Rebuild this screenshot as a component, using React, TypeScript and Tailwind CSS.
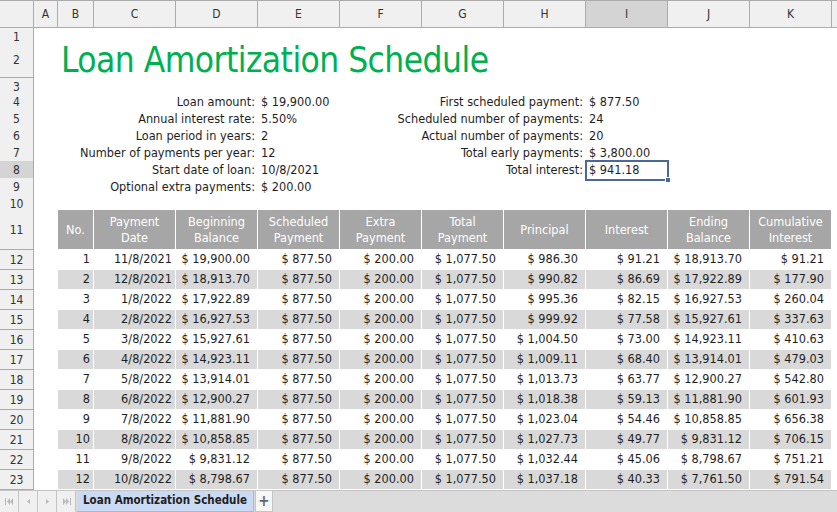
import type { ReactNode } from 'react';

const COLS = 'grid grid-cols-[34px_24px_36px_repeat(9,82px)_1fr]';
const LETTERS = ['A', 'B', 'C', 'D', 'E', 'F', 'G', 'H', 'I', 'J', 'K'];

interface Payment {
  no: number;
  date: string;
  begin: string;
  principal: string;
  interest: string;
  ending: string;
  cumulative: string;
}

const payments: Payment[] = [
  { no: 1, date: '11/8/2021', begin: '$ 19,900.00', principal: '$ 986.30', interest: '$ 91.21', ending: '$ 18,913.70', cumulative: '$ 91.21' },
  { no: 2, date: '12/8/2021', begin: '$ 18,913.70', principal: '$ 990.82', interest: '$ 86.69', ending: '$ 17,922.89', cumulative: '$ 177.90' },
  { no: 3, date: '1/8/2022', begin: '$ 17,922.89', principal: '$ 995.36', interest: '$ 82.15', ending: '$ 16,927.53', cumulative: '$ 260.04' },
  { no: 4, date: '2/8/2022', begin: '$ 16,927.53', principal: '$ 999.92', interest: '$ 77.58', ending: '$ 15,927.61', cumulative: '$ 337.63' },
  { no: 5, date: '3/8/2022', begin: '$ 15,927.61', principal: '$ 1,004.50', interest: '$ 73.00', ending: '$ 14,923.11', cumulative: '$ 410.63' },
  { no: 6, date: '4/8/2022', begin: '$ 14,923.11', principal: '$ 1,009.11', interest: '$ 68.40', ending: '$ 13,914.01', cumulative: '$ 479.03' },
  { no: 7, date: '5/8/2022', begin: '$ 13,914.01', principal: '$ 1,013.73', interest: '$ 63.77', ending: '$ 12,900.27', cumulative: '$ 542.80' },
  { no: 8, date: '6/8/2022', begin: '$ 12,900.27', principal: '$ 1,018.38', interest: '$ 59.13', ending: '$ 11,881.90', cumulative: '$ 601.93' },
  { no: 9, date: '7/8/2022', begin: '$ 11,881.90', principal: '$ 1,023.04', interest: '$ 54.46', ending: '$ 10,858.85', cumulative: '$ 656.38' },
  { no: 10, date: '8/8/2022', begin: '$ 10,858.85', principal: '$ 1,027.73', interest: '$ 49.77', ending: '$ 9,831.12', cumulative: '$ 706.15' },
  { no: 11, date: '9/8/2022', begin: '$ 9,831.12', principal: '$ 1,032.44', interest: '$ 45.06', ending: '$ 8,798.67', cumulative: '$ 751.21' },
  { no: 12, date: '10/8/2022', begin: '$ 8,798.67', principal: '$ 1,037.18', interest: '$ 40.33', ending: '$ 7,761.50', cumulative: '$ 791.54' },
];

const headers = [
  ['No.'],
  ['Payment', 'Date'],
  ['Beginning', 'Balance'],
  ['Scheduled', 'Payment'],
  ['Extra', 'Payment'],
  ['Total', 'Payment'],
  ['Principal'],
  ['Interest'],
  ['Ending', 'Balance'],
  ['Cumulative', 'Interest'],
];

const leftInfo: [string, string][] = [
  ['Loan amount:', '$ 19,900.00'],
  ['Annual interest rate:', '5.50%'],
  ['Loan period in years:', '2'],
  ['Number of payments per year:', '12'],
  ['Start date of loan:', '10/8/2021'],
  ['Optional extra payments:', '$ 200.00'],
];

const rightInfo: [string, string][] = [
  ['First scheduled payment:', '$ 877.50'],
  ['Scheduled number of payments:', '24'],
  ['Actual number of payments:', '20'],
  ['Total early payments:', '$ 3,800.00'],
  ['Total interest:', '$ 941.18'],
];

function RowHead({ n, active }: { n: number; active?: boolean }) {
  return (
    <div
      className={`flex items-center justify-center border-r border-b border-[#ababab] text-[12px] text-[#333] ${
        active ? 'bg-[#d4d4d4]' : 'bg-[#f0f0f0]'
      }`}
    >
      {n}
    </div>
  );
}

function Row({ n, h, active, children }: { n: number; h: string; active?: boolean; children?: ReactNode }) {
  return (
    <div className={`${COLS} ${h}`}>
      <RowHead n={n} active={active} />
      {children}
    </div>
  );
}

function Empty({ count = 1 }: { count?: number }) {
  return (
    <>
      {Array.from({ length: count }).map((_, i) => (
        <div key={i} />
      ))}
    </>
  );
}

function Label({ text }: { text: string }) {
  return (
    <div className="flex items-center justify-end whitespace-nowrap pr-[3px]">
      <span>{text}</span>
    </div>
  );
}

function Value({ text, selected }: { text: string; selected?: boolean }) {
  return (
    <div className="relative flex items-center whitespace-nowrap pl-[3px]">
      {text}
      {selected && (
        <div className="absolute -left-px -top-px -right-px -bottom-px border-2 border-[#4a6899]">
          <div className="absolute -right-[4px] -bottom-[4px] w-[6px] h-[6px] bg-[#4a6899] border border-white" />
        </div>
      )}
    </div>
  );
}

function TCell({ children, bg, pr = 'pr-[7px]' }: { children: ReactNode; bg: string; pr?: string }) {
  return (
    <div className={`flex items-center justify-end whitespace-nowrap border-r border-b border-white ${bg} ${pr}`}>
      {children}
    </div>
  );
}

export default function App() {
  return (
    <div className="w-[837px] h-[512px] overflow-hidden bg-white flex flex-col text-[12.6px] text-[#1e1e1e] font-['DejaVu_Sans_Condensed','DejaVu_Sans',sans-serif]">
      {/* column headers */}
      <div className={`${COLS} h-[28px] text-[12px]`}>
        <div className="border-r border-b border-t border-[#ababab] bg-[#f0f0f0]" />
        {LETTERS.map((l) => (
          <div
            key={l}
            className={`flex items-center justify-center border-r border-b border-t border-[#ababab] text-[#333] ${
              l === 'I' ? 'bg-[#d4d4d4]' : 'bg-[#f0f0f0]'
            }`}
          >
            {l}
          </div>
        ))}
        <div className="border-b border-t border-[#ababab] bg-[#f0f0f0]" />
      </div>

      <Row n={1} h="h-[15px]" />
      <Row n={2} h="h-[35px]">
        <div />
        <div className="relative">
          <div className="absolute left-[3px] top-0 bottom-0 flex items-center whitespace-nowrap text-[35px] text-[#00b050] tracking-[-0.55px]">
            Loan Amortization Schedule
          </div>
        </div>
      </Row>
      <Row n={3} h="h-[15px]" />

      {leftInfo.map(([label, value], i) => {
        const right = rightInfo[i];
        return (
          <Row key={label} n={4 + i} h="h-[17px]" active={i === 4}>
            <Empty count={3} />
            <Label text={label} />
            <Value text={value} />
            <Empty count={2} />
            {right ? <Label text={right[0]} /> : <div />}
            {right ? <Value text={right[1]} selected={i === 4} /> : <div />}
            <Empty count={3} />
          </Row>
        );
      })}

      <Row n={10} h="h-[15px]" />

      <Row n={11} h="h-[40px]">
        <div />
        {headers.map((lines) => (
          <div
            key={lines.join(' ')}
            className="flex flex-col items-center justify-center border-r border-b border-white bg-[#a6a6a6] text-white leading-[16px]"
          >
            {lines.map((t) => (
              <span key={t}>{t}</span>
            ))}
          </div>
        ))}
        <div />
      </Row>

      {payments.map((p, i) => {
        const bg = i % 2 === 0 ? 'bg-white' : 'bg-[#d9d9d9]';
        return (
          <Row key={p.no} n={12 + i} h="h-[20px]">
            <div />
            <TCell bg={bg} pr="pr-[3px]">{p.no}</TCell>
            <TCell bg={bg} pr="pr-[3px]">{p.date}</TCell>
            <TCell bg={bg}>{p.begin}</TCell>
            <TCell bg={bg}>$ 877.50</TCell>
            <TCell bg={bg}>$ 200.00</TCell>
            <TCell bg={bg}>$ 1,077.50</TCell>
            <TCell bg={bg}>{p.principal}</TCell>
            <TCell bg={bg}>{p.interest}</TCell>
            <TCell bg={bg}>{p.ending}</TCell>
            <TCell bg={bg}>{p.cumulative}</TCell>
            <div />
          </Row>
        );
      })}

      {/* sheet tabs */}
      <div className="flex h-[22px] bg-[#dcdcdc] border-t border-[#c4c4c4]">
        {['first', 'prev', 'next', 'last'].map((k) => (
          <div key={k} className="flex w-[19px] items-center justify-center border-r border-[#c4c4c4] bg-[#f0f0f0]">
            <svg width="9" height="7" viewBox="0 0 9 7" fill="#b8b8b8">
              {k === 'first' && (
                <>
                  <rect x="0" y="0" width="1" height="7" />
                  <path d="M5 0 L2 3.5 L5 7 Z" />
                  <path d="M8 0 L5 3.5 L8 7 Z" />
                </>
              )}
              {k === 'prev' && <path d="M6 1 L3 3.5 L6 6 Z" />}
              {k === 'next' && <path d="M3 1 L6 3.5 L3 6 Z" />}
              {k === 'last' && (
                <>
                  <path d="M1 0 L4 3.5 L1 7 Z" />
                  <path d="M4 0 L7 3.5 L4 7 Z" />
                  <rect x="8" y="0" width="1" height="7" />
                </>
              )}
            </svg>
          </div>
        ))}
        <div className="ml-[1px] flex w-[177px] items-center justify-center whitespace-nowrap border-r border-b border-[#a9b8d0] bg-[#cbdaf3] text-[11.5px] font-bold text-[#1e1e1e]">
          Loan Amortization Schedule
        </div>
        <div className="ml-[1px] flex w-[18px] items-center justify-center border-r border-l border-b border-[#c4c4c4] bg-[#f7f7f7] text-[15px] font-bold text-[#666]">
          +
        </div>
      </div>
    </div>
  );
}
